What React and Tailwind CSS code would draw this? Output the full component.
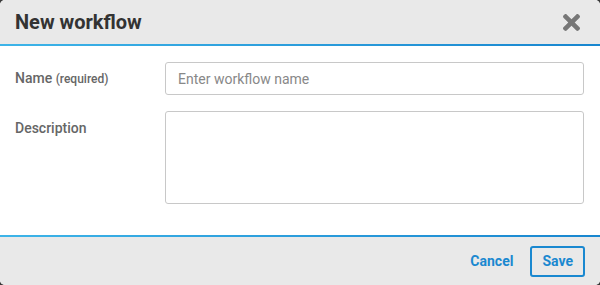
import { FaTimes } from 'react-icons/fa';

const App = () => {
  return (
    <div className="w-[600px] h-[285px] bg-[#3a3a3a] font-['Roboto',sans-serif]">
      <div className="w-full h-full rounded-[5px] overflow-hidden bg-white flex flex-col">
        {/* Header */}
        <div className="h-[44px] bg-[#e9e9e9] flex items-center justify-between pl-[15px] pr-[20px]">
          <h2 className="text-[20px] font-bold text-[#333] leading-none">New workflow</h2>
          <button className="text-[#777] leading-none" aria-label="Close">
            <FaTimes className="w-[17px] h-[25px]" />
          </button>
        </div>
        <div className="h-[2px] bg-gradient-to-r from-[#3db4e8] to-[#1886cf]" />

        {/* Body */}
        <div className="flex-1 px-[15px] pt-[16px]">
          <div className="flex items-center">
            <label className="w-[150px] text-[14px] font-medium text-[#666]">
              Name <span className="text-[12px]">(required)</span>
            </label>
            <input
              type="text"
              placeholder="Enter workflow name"
              className="w-[419px] h-[33px] border border-[#c8c8c8] rounded-[3px] px-[12px] text-[14px] text-[#333] placeholder:text-[#888] outline-none"
            />
          </div>
          <div className="flex items-start mt-[16px]">
            <label className="w-[150px] text-[14px] font-medium text-[#666] pt-[7px]">Description</label>
            <textarea className="w-[419px] h-[93px] border border-[#c8c8c8] rounded-[3px] px-[12px] py-[8px] text-[14px] resize-none outline-none" />
          </div>
        </div>

        {/* Footer */}
        <div className="h-[2px] bg-gradient-to-r from-[#3db4e8] to-[#1886cf]" />
        <div className="h-[48px] bg-[#e9e9e9] flex items-center justify-end gap-[17px] pr-[15px]">
          <button className="text-[14px] font-bold text-[#1a88d0]">Cancel</button>
          <button className="h-[31px] px-[10px] border-2 border-[#1a88d0] rounded-[3px] text-[14px] font-bold text-[#1a88d0]">
            Save
          </button>
        </div>
      </div>
    </div>
  );
};

export default App;
